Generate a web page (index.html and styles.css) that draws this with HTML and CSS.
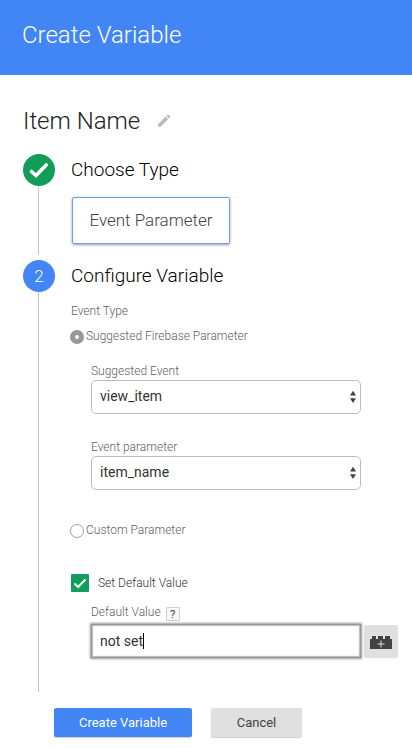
FILE: index.html
```html
<!DOCTYPE html>
<html lang="en">
<head>
<meta charset="utf-8">
<title>Create Variable</title>
<link rel="stylesheet" href="styles.css">
</head>
<body>
<header class="topbar"><h1>Create Variable</h1></header>
<main>
  <div class="name-row">
    <h2>Item Name</h2>
    <svg class="pencil" viewBox="0 0 14 14"><path d="M1 10.200 8.600 2.600l2.600 2.600L3.600 12.800H1zM9.400 1.800l1-1q.6-.5 1.200 0l1.400 1.400q.5.6 0 1.200l-1 1z"/></svg>
  </div>
  <section class="step step-type">
    <div class="rail">
      <span class="badge done"><svg viewBox="0 0 32 32"><path d="M8.500 17.500 13 21.500 23.200 11"/></svg></span>
      <span class="line"></span>
    </div>
    <div class="body">
      <h3>Choose Type</h3>
      <button class="type-card"><span>Event Parameter</span></button>
    </div>
  </section>
  <section class="step step-config">
    <div class="rail">
      <span class="badge">2</span>
      <span class="line"></span>
    </div>
    <div class="body">
      <h3>Configure Variable</h3>
      <p class="label event-type">Event Type</p>
      <div class="radio-row"><i class="radio on"></i><span class="label">Suggested Firebase Parameter</span></div>
      <div class="field">
        <p class="label">Suggested Event</p>
        <div class="select"><span>view_item</span><svg viewBox="0 0 6 14"><path d="M0 5.500 3 .7 6 5.500zM0 8.300h6L3 13z"/></svg></div>
      </div>
      <div class="field second">
        <p class="label">Event parameter</p>
        <div class="select"><span>item_name</span><svg viewBox="0 0 6 14"><path d="M0 5.500 3 .7 6 5.500zM0 8.300h6L3 13z"/></svg></div>
      </div>
      <div class="radio-row custom"><i class="radio"></i><span class="label">Custom Parameter</span></div>
      <div class="check-row">
        <span class="checkbox"><svg viewBox="0 0 18 18"><path d="m3.500 9.500 3.500 3.500 7.500-7.500"/></svg></span>
        <span class="label dark">Set Default Value</span>
      </div>
      <div class="default-label"><span class="label">Default Value</span><span class="help">?</span></div>
      <div class="default-row">
        <div class="input"><span>not set</span><i class="caret"></i></div>
        <button class="brick"><svg viewBox="0 0 22 14"><path class="block" d="M0 3h2V0h4v3h2V0h5v3h2V0h5v3h2v10H0z"/><path class="plus" d="M7.500 8h7M11 4.500v7"/></svg></button>
      </div>
    </div>
  </section>
</main>
<footer class="actions">
  <button class="btn primary">Create Variable</button>
  <button class="btn cancel">Cancel</button>
</footer>
</body>
</html>
```
FILE: styles.css
```css
* { box-sizing: border-box; }
body { margin: 0; width: 412px; height: 748px; overflow: hidden; background: #fff; font-family: Roboto, sans-serif; color: #212121; white-space: nowrap; }
h1, h2, h3, p { margin: 0; font-weight: 300; }
button { font-family: inherit; margin: 0; padding: 0; border: 0; }
svg { display: block; }
.topbar { height: 75px; padding: 20px 0 0 22px; background: #4285f4; color: #fff; }
.topbar h1 { font-size: 24px; line-height: 30px; }
main { padding: 31px 0 0 23px; }
.name-row { display: flex; align-items: center; height: 30px; gap: 17px; margin-bottom: 18px; }
.name-row h2 { font-size: 24px; line-height: 30px; }
.pencil { width: 14px; height: 14px; fill: #bdbdbd; }
.step { display: flex; gap: 16px; }
.step-type { height: 101px; margin-bottom: 5px; }
.step-config { height: 432px; }
.rail { width: 32px; display: flex; flex-direction: column; align-items: center; }
.badge { width: 32px; height: 32px; flex: none; border-radius: 50%; background: #4285f4; color: #fff; font-size: 17px; font-weight: 300; line-height: 32px; text-align: center; }
.done { background: #129d58; }
.done path { fill: none; stroke: #fff; stroke-width: 3.6; stroke-linecap: round; }
.line { width: 1px; flex: 1; margin-right: 1px; background: #c6c6c6; }
h3 { font-size: 19px; line-height: 32px; height: 32px; color: #000; }
.type-card { display: block; margin: 11px 0 0 1px; width: 158px; height: 47px; padding-bottom: 2px; border: 1px solid #6ba0f5; border-radius: 2px; background: #fff; box-shadow: 0 1px 3px rgba(0,0,0,.4); color: #424242; font-size: 17px; font-weight: 300; }
.label { font-size: 12px; line-height: 16px; font-weight: 300; color: #616161; }
.event-type { margin-top: 11px; }
.radio-row { display: flex; align-items: center; height: 16px; margin: 9px 0 0 -1px; gap: 2px; }
.radio { width: 14px; height: 14px; flex: none; margin-top: 2px; border: 1px solid #9e9e9e; border-radius: 50%; }
.radio.on { border: 5px solid #98989c; }
.field { margin: 19px 0 0 20px; }
.field.second { margin-top: 25px; }
.select { display: flex; align-items: center; justify-content: space-between; width: 270px; height: 34px; margin-top: 1px; padding: 0 4px 0 8px; border: 1px solid #bdbdbd; border-radius: 5px; font-size: 14px; color: #333; }
.select span { margin-bottom: 2px; }
.select svg { width: 6px; height: 14px; fill: #424242; }
.custom { margin-top: 32px; }
.check-row { display: flex; align-items: center; height: 18px; margin-top: 36px; gap: 9px; }
.checkbox { width: 18px; height: 18px; border-radius: 1px; background: #129d58; }
.checkbox path { fill: none; stroke: #fff; stroke-width: 2; }
.label.dark { color: #333; }
.default-label { display: flex; margin: 12px 0 0 20px; height: 18px; gap: 5px; }
.help { width: 14px; height: 14px; margin-top: 3px; border: 1px solid #d0d0d0; border-radius: 1px; background: #f7f7f7; font-size: 11px; line-height: 13px; text-align: center; color: #424242; }
.default-row { display: flex; margin: 2px 0 0 20px; gap: 3px; }
.input { display: flex; align-items: center; width: 270px; height: 34px; padding-left: 8px; border: 1px solid #98989c; box-shadow: 0 0 2px 1px #98989c, inset 0 0 1px 1px #b8b8bc; font-size: 14px; color: #333; }
.caret { width: 1px; height: 16px; background: #000; }
.brick { display: flex; align-items: center; justify-content: center; width: 34px; height: 33px; margin-top: 1px; border-radius: 2px; background: #e0e0e0; }
.brick svg { width: 22px; height: 14px; margin-top: 2px; }
.block { fill: #424242; }
.plus { stroke: #e0e0e0; stroke-width: 1; }
.actions { display: flex; gap: 19px; margin: 16px 0 0 54px; }
.btn { height: 29px; border-radius: 2px; font-size: 13px; box-shadow: 0 1px 1px rgba(0,0,0,.2); }
.primary { width: 138px; background: #4285f4; color: #fff; }
.cancel { width: 91px; background: #e0e0e0; color: #424242; }
```
